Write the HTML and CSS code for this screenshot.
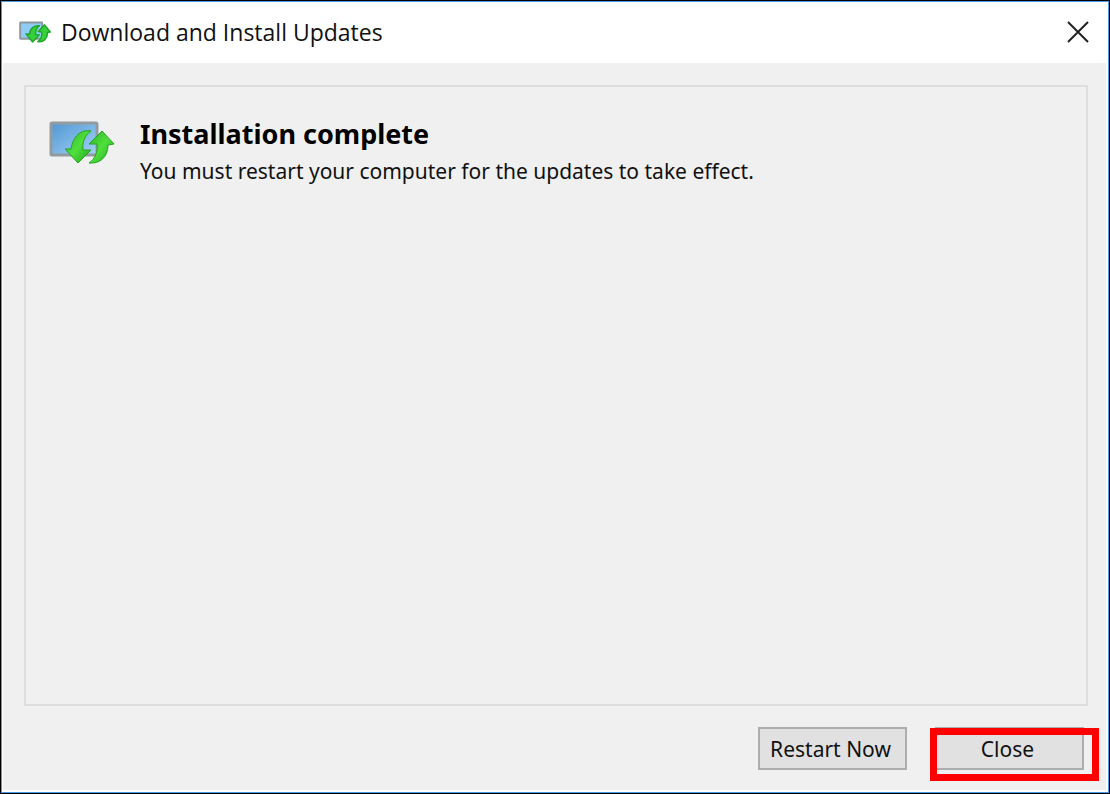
FILE: index.html
```html
<!DOCTYPE html>
<html lang="en">
<head>
    <meta charset="UTF-8">
    <meta name="viewport" content="width=device-width, initial-scale=1.0">
    <title>Download and Install Updates</title>
    <link rel="stylesheet" href="styles.css">
</head>
<body>
    <div class="window">
        <header class="titlebar">
            <svg class="title-icon" viewBox="0 0 66 46" aria-hidden="true">
                <rect x="2" y="3" width="46" height="34" rx="1" fill="#8fcdf6" stroke="#8d989e" stroke-width="4"/>
                <path d="M42 10C32 9 22 15 22 27L14 27L28 44L42 29L34 28C34 21 37 14 42 10Z" fill="#35d03a" stroke="#20a52a" stroke-width="3" stroke-linejoin="round"/>
                <path d="M39 43C50 45 60 37 59 24L65 23L53 8L40 22L47 23C48 31 46 38 39 43Z" fill="#35d03a" stroke="#20a52a" stroke-width="3" stroke-linejoin="round"/>
            </svg>
            <h1 class="title">Download and Install Updates</h1>
            <button class="window-close" type="button" aria-label="Close window">
                <svg viewBox="0 0 22 22" aria-hidden="true">
                    <path d="M1 1L21 21M21 1L1 21" stroke="#222" stroke-width="2"/>
                </svg>
            </button>
        </header>

        <main class="content">
            <section class="panel">
                <svg class="status-icon" viewBox="0 0 66 44" aria-hidden="true">
                    <defs>
                        <linearGradient id="screen" x1="0" y1="0" x2="1" y2="1">
                            <stop offset="0" stop-color="#4f97d4"/>
                            <stop offset="1" stop-color="#a5d3f5"/>
                        </linearGradient>
                        <linearGradient id="arrow" x1="0" y1="0" x2="1" y2="1">
                            <stop offset="0" stop-color="#2fae2c"/>
                            <stop offset="0.5" stop-color="#4fe03c"/>
                            <stop offset="1" stop-color="#1fa51c"/>
                        </linearGradient>
                    </defs>
                    <rect x="2" y="2" width="46" height="32" rx="1" fill="url(#screen)" stroke="#939b9f" stroke-width="3"/>
                    <path d="M42 10C32 8 24 15 22 28L16 28L29 42L42 29L34 29C33 21 36 14 42 10Z" fill="url(#arrow)" stroke="#22a422" stroke-width="1" stroke-linejoin="round"/>
                    <path d="M40 42C50 43 59 37 59 24L65 23L53 10L40 23L48 23C49 31 46 38 40 42Z" fill="url(#arrow)" stroke="#22a422" stroke-width="1" stroke-linejoin="round"/>
                </svg>
                <div class="message">
                    <h2>Installation complete</h2>
                    <p>You must restart your computer for the updates to take effect.</p>
                </div>
            </section>

            <footer class="actions">
                <button class="btn" type="button">Restart Now</button>
                <div class="highlighted">
                    <button class="btn" type="button">Close</button>
                </div>
            </footer>
        </main>
    </div>
</body>
</html>
```
FILE: styles.css
```css
* { box-sizing: border-box; }
body {
    margin: 0;
    font-family: "Noto Sans", "Open Sans", sans-serif;
    color: #111;
    background: #000;
}
h1, h2, p { margin: 0; }
.window {
    display: flex;
    flex-direction: column;
    min-height: 100vh;
    border: 1px solid #000;
    background: #fff;
    box-shadow: inset 0 0 0 1px #4a9ae6;
    padding: 2px 3px 3px 2px;
}
.titlebar {
    display: flex;
    align-items: center;
    height: 60px;
    padding: 0 17px 2px 16px;
}
.title-icon {
    width: 32px;
    height: 22px;
    margin-right: 10px;
}
.title {
    flex: 1;
    font-family: "Open Sans", "Noto Sans", sans-serif;
    font-size: 23px;
    font-weight: 400;
}
.window-close {
    width: 22px;
    height: 22px;
    padding: 0;
    border: none;
    background: none;
}
.window-close svg {
    display: block;
    width: 22px;
    height: 22px;
}
.content {
    flex: 1;
    display: flex;
    flex-direction: column;
    padding: 22px 18px 20px 21px;
    background: #f0f0f0;
}
.panel {
    flex: 1;
    display: flex;
    align-items: flex-start;
    gap: 25px;
    padding: 30px 23px;
    border: 2px solid #dedede;
}
.status-icon {
    width: 66px;
    height: 44px;
    margin-top: 4px;
}
.message h2 {
    color: #000;
    font-size: 27px;
    line-height: 34px;
}
.message p {
    font-size: 21px;
    line-height: 40px;
}
.actions {
    display: flex;
    justify-content: flex-end;
    gap: 28px;
    padding-top: 21px;
    padding-right: 4px;
}
.btn {
    width: 149px;
    height: 43px;
    padding: 0 4px 0 0;
    border: 2px solid #adadad;
    background: #e1e1e1;
    color: #111;
    font-family: inherit;
    font-size: 21px;
    line-height: 38px;
}
.highlighted { position: relative; }
/* callout frame drawn over the button */
.highlighted::after {
    content: "";
    position: absolute;
    inset: 1px -15px -11px -5px;
    border: 7px solid #f00;
    pointer-events: none;
}
```
